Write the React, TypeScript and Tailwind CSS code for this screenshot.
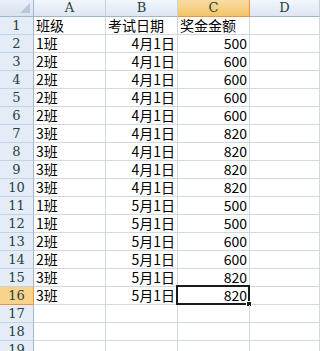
import React from "react";

const rows: [string, string, string][] = [
  ["班级", "考试日期", "奖金金额"],
  ["1班", "4月1日", "500"],
  ["2班", "4月1日", "600"],
  ["2班", "4月1日", "600"],
  ["2班", "4月1日", "600"],
  ["2班", "4月1日", "600"],
  ["3班", "4月1日", "820"],
  ["3班", "4月1日", "820"],
  ["3班", "4月1日", "820"],
  ["3班", "4月1日", "820"],
  ["1班", "5月1日", "500"],
  ["1班", "5月1日", "500"],
  ["2班", "5月1日", "600"],
  ["2班", "5月1日", "600"],
  ["3班", "5月1日", "820"],
  ["3班", "5月1日", "820"],
  ["", "", ""],
  ["", "", ""],
  ["", "", ""],
];

const cellFont = { fontFamily: '"Noto Sans CJK SC", "Liberation Sans", sans-serif' };
const headFont = { fontFamily: '"DejaVu Serif", "Liberation Serif", serif' };

export default function App() {
  const cols = ["A", "B", "C", "D"];
  return (
    <div className="w-[320px] h-[351px] overflow-hidden bg-white">
      <div className="grid grid-cols-[34px_72px_72px_72px_1fr] auto-rows-[18px] grid-rows-[17px]">
        <div className="relative bg-gradient-to-b from-[#e9eff8] to-[#d9e2ef] border-r border-b border-[#9eb6ce]">
          <div className="absolute right-[3px] bottom-[3px] w-0 h-0 border-l-[10px] border-l-transparent border-b-[10px] border-b-[#b8c7da]" />
        </div>
        {cols.map((c) =>
          c === "C" ? (
            <div
              key={c}
              className="flex items-center justify-center bg-gradient-to-b from-[#f9dca4] to-[#f2c466] border-b border-r border-[#f29436] text-[#27413e] text-[13px] leading-[16px]"
              style={headFont}
            >
              {c}
            </div>
          ) : (
            <div
              key={c}
              className="flex items-center justify-center bg-gradient-to-b from-[#f3f7fc] to-[#dde6f2] border-b border-b-[#9eb6ce] border-r border-r-[#c5d2e2] text-[#27413e] text-[13px] leading-[16px]"
              style={headFont}
            >
              {c}
            </div>
          )
        )}
        {rows.map((r, i) => {
          const n = i + 1;
          const sel = n === 16;
          return (
            <React.Fragment key={n}>
              <div
                className={
                  sel
                    ? "flex items-center justify-center bg-[#f8d38b] border-r border-r-[#f29436] border-b border-b-[#f29436] text-[#27413e] text-[13px] leading-[17px]"
                    : "flex items-center justify-center bg-[#e4ecf7] border-r border-r-[#9eb6ce] border-b border-b-[#c5d2e2] text-[#27413e] text-[13px] leading-[17px]"
                }
                style={headFont}
              >
                {n}
              </div>
              <div className="flex items-center pl-[2px] border-r border-b border-[#d0d7e5] text-[14px] text-black leading-[17px]" style={cellFont}>
                {r[0]}
              </div>
              <div
                className={
                  "flex items-center pr-[2px] border-r border-b border-[#d0d7e5] text-[14px] text-black leading-[17px] " +
                  (n === 1 ? "justify-start pl-[2px]" : "justify-end")
                }
                style={cellFont}
              >
                {r[1]}
              </div>
              <div
                className={
                  "relative flex items-center pr-[2px] border-r border-b border-[#d0d7e5] text-[14px] text-black leading-[17px] " +
                  (n === 1 ? "justify-start pl-[2px]" : "justify-end")
                }
                style={cellFont}
              >
                {r[2]}
                {sel && (
                  <>
                    <div className="absolute left-[-2px] top-[-2px] right-[-1px] bottom-[-1px] border-2 border-[#1a1a1a]" />
                    <div className="absolute right-[-3px] bottom-[-3px] w-[6px] h-[6px] bg-[#1a1a1a] border border-white" />
                  </>
                )}
              </div>
              <div className="border-r border-b border-[#d0d7e5]" />
            </React.Fragment>
          );
        })}
      </div>
    </div>
  );
}
